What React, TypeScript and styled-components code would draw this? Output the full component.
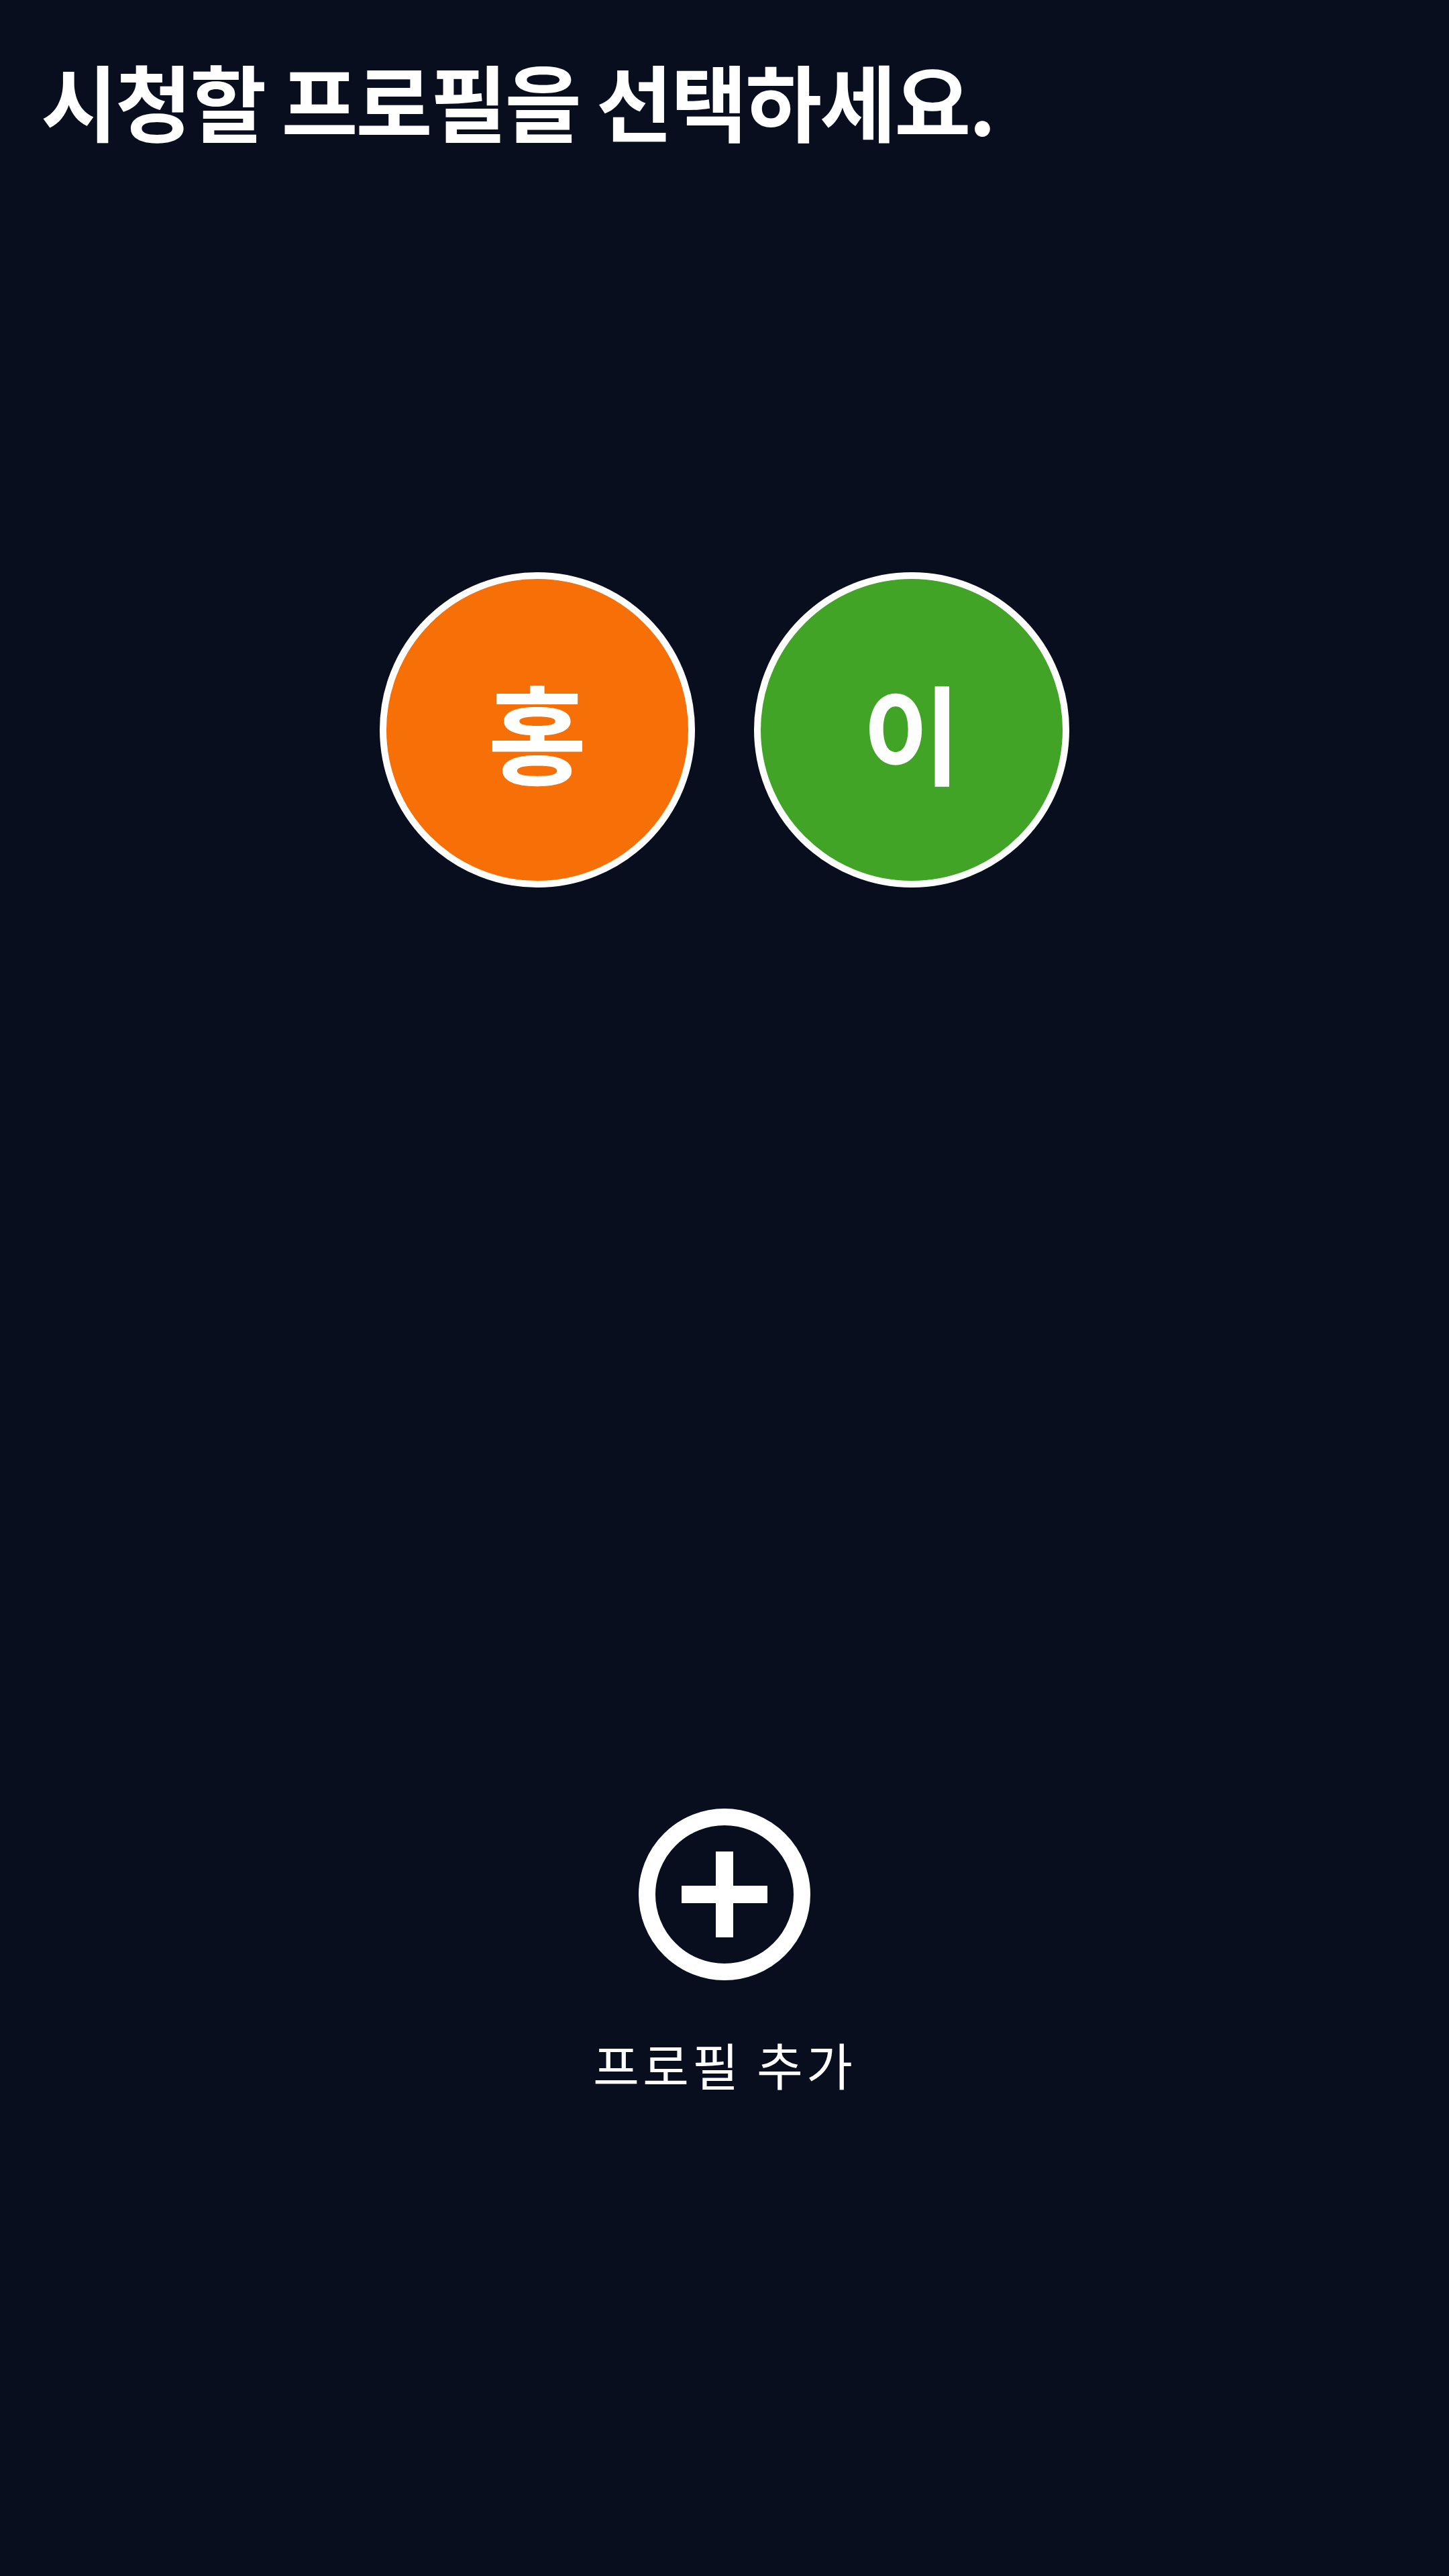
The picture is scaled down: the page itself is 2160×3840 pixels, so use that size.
import styled, { createGlobalStyle } from "styled-components";

const GlobalStyle = createGlobalStyle`
  html, body {
    margin: 0;
    padding: 0;
    background: #090e1f;
  }
`;

const Page = styled.div`
  width: 2160px;
  height: 3840px;
  background: #090e1f;
  display: flex;
  flex-direction: column;
  font-family: "Noto Sans CJK KR", "Noto Sans", sans-serif;
  color: #ffffff;
  overflow: hidden;
`;

const Title = styled.h1`
  margin: 0;
  padding: 74px 61px 0;
  font-size: 124px;
  line-height: 1.2;
  font-weight: 700;
  letter-spacing: -3px;
`;

const ProfileRow = styled.div`
  display: flex;
  justify-content: center;
  gap: 88px;
  margin-top: 630px;
`;

const Avatar = styled.button<{ $color: string }>`
  box-sizing: border-box;
  width: 470px;
  height: 470px;
  border-radius: 50%;
  border: 10px solid #ffffff;
  background: ${(p) => p.$color};
  display: flex;
  align-items: center;
  justify-content: center;
  padding: 0;
  font-family: inherit;
  font-size: 160px;
  font-weight: 700;
  color: #ffffff;
  line-height: 1;
  cursor: pointer;
`;

const AddProfile = styled.button`
  display: flex;
  flex-direction: column;
  align-items: center;
  align-self: center;
  margin-top: 1373px;
  padding: 0;
  background: none;
  border: none;
  color: #ffffff;
  font-family: inherit;
  cursor: pointer;
`;

const AddLabel = styled.span`
  margin-top: 80px;
  font-size: 75px;
  line-height: 1.2;
  font-weight: 400;
  letter-spacing: 5px;
`;

const PlusCircleIcon = () => (
  <svg width="256" height="256" viewBox="0 0 256 256">
    <circle cx="128" cy="128" r="115.5" fill="none" stroke="#ffffff" strokeWidth="25" />
    <rect x="64" y="115" width="128" height="26" fill="#ffffff" />
    <rect x="115" y="64" width="26" height="128" fill="#ffffff" />
  </svg>
);

const profiles = [
  { name: "홍", color: "#f77007" },
  { name: "이", color: "#42a427" },
];

export default function App() {
  return (
    <>
      <GlobalStyle />
      <Page>
        <Title>시청할 프로필을 선택하세요.</Title>
        <ProfileRow>
          {profiles.map((p) => (
            <Avatar key={p.name} $color={p.color}>
              {p.name}
            </Avatar>
          ))}
        </ProfileRow>
        <AddProfile>
          <PlusCircleIcon />
          <AddLabel>프로필 추가</AddLabel>
        </AddProfile>
      </Page>
    </>
  );
}
